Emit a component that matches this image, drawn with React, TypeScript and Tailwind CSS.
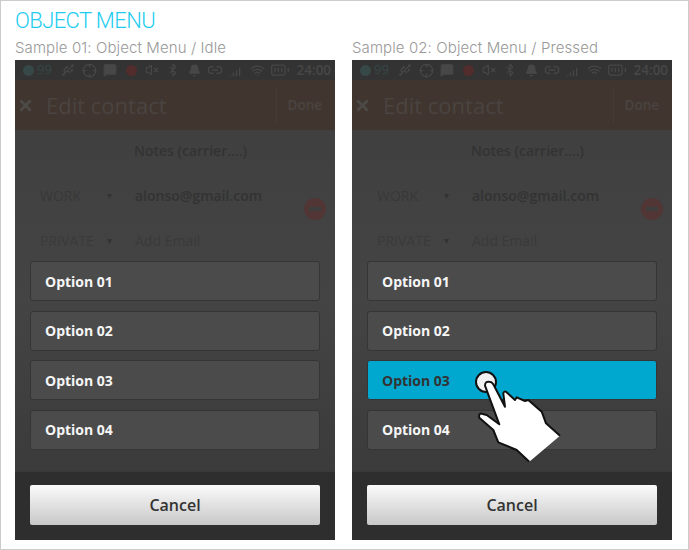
import { Bell, Bluetooth, Crosshair, MessageSquare, Usb, Wifi, BatteryFull, Link2, SignalHigh, VolumeX, X } from 'lucide-react'

const options = ['Option 01', 'Option 02', 'Option 03', 'Option 04']

function Slot({ children }: { children: React.ReactNode }) {
  return <div className="w-[21px] flex justify-center">{children}</div>
}

function StatusBar() {
  return (
    <div className="h-5 bg-[#333333] flex items-center pl-[8px] text-[#474747]">
      <div className="flex items-center gap-[3px] w-[34.5px]">
        <div className="w-[11px] h-[11px] rounded-full bg-[#364847]" />
        <span className="text-[13px] font-['Open_Sans',sans-serif] text-[#364847]">99</span>
      </div>
      <Slot><Usb size={14} /></Slot>
      <Slot><Crosshair size={15} /></Slot>
      <Slot><MessageSquare size={14} fill="#474747" /></Slot>
      <Slot><div className="w-[11px] h-[11px] rounded-full bg-[#532c2c]" /></Slot>
      <Slot><VolumeX size={14} /></Slot>
      <Slot><Bluetooth size={14} /></Slot>
      <Slot><Bell size={13} fill="#474747" /></Slot>
      <Slot><Link2 size={16} /></Slot>
      <Slot><SignalHigh size={15} /></Slot>
      <Slot><Wifi size={15} /></Slot>
      <div className="w-[21px] flex justify-center ml-[2px]"><BatteryFull size={20} strokeWidth={1.5} /></div>
      <span className="ml-[6px] text-[13.5px] font-semibold font-['Open_Sans',sans-serif]">24:00</span>
    </div>
  )
}

function Backdrop() {
  return (
    <>
      <StatusBar />
      <div className="h-[50px] bg-[#413530] flex items-center font-['Open_Sans',sans-serif] text-[#4a4440] pt-[1px]">
        <X size={17} strokeWidth={4} className="ml-[2px] text-[#4c4a46]" />
        <span className="text-[22px] ml-[12px]">Edit contact</span>
        <div className="ml-auto h-[34px] border-l border-[#483b34] flex items-center pl-[11px] pr-[13px]">
          <span className="text-[13.5px] font-semibold">Done</span>
        </div>
      </div>
      <div className="h-[341px] bg-gradient-to-b from-[#404040] via-[#444444] to-[#3b3b3b] font-['Open_Sans',sans-serif] text-[#333333] text-[14px]">
        <div className="pt-[10px] pl-[119px] font-semibold">Notes (carrier....)</div>
        <div className="flex items-center mt-[24px] pl-[25px]">
          <span className="w-[67px] text-[#383838]">WORK</span>
          <span className="w-[9px] text-[10px] text-[#333333]">▾</span>
          <span className="ml-[19px] font-semibold">alonso@gmail.com</span>
        </div>
        <div className="flex items-center mt-[24px] pl-[25px] text-[#3a3a3a]">
          <span className="w-[67px]">PRIVATE</span>
          <span className="w-[9px] text-[10px] text-[#333333]">▾</span>
          <span className="ml-[19px]">Add Email</span>
        </div>
      </div>
      <div className="h-[69px] bg-[#2e2e2e] border-t border-[#393939]" />
    </>
  )
}

function Phone({ title, pressed }: { title: string; pressed?: number }) {
  return (
    <div className="w-[320px]">
      <div className="h-[20px] text-[15px] leading-[16px] text-[#999999] font-['Inter',sans-serif] font-light tracking-[0.1px]">{title}</div>
      <div className="relative h-[480px] overflow-hidden">
        <Backdrop />
        {/* red minus sits over the form */}
        <div className="absolute left-[289px] top-[138px] w-[22px] h-[22px] rounded-full bg-[#523636] flex items-center justify-center">
          <div className="w-[12px] h-[4px] bg-[#3e3e3e]" />
        </div>
        <div className="absolute left-[15px] top-[201px] w-[290px] flex flex-col gap-[9.5px]">
          {options.map((o, i) => (
            <div
              key={o}
              className={
                i === pressed
                  ? 'h-[40px] flex items-center pl-[14px] rounded-[3px] border border-[#353535] bg-[#00a8d0] text-[#333333] text-[14px] font-bold font-["Open_Sans",sans-serif]'
                  : 'h-[40px] flex items-center pl-[14px] rounded-[3px] border border-[#353535] bg-[#4b4b4b] text-[#f6f6f6] text-[14px] font-bold font-["Open_Sans",sans-serif]'
              }
            >
              {o}
            </div>
          ))}
        </div>
        <div className="absolute left-[15px] top-[425px] w-[290px] h-[40px] rounded-[2px] bg-gradient-to-b from-[#fbfbfb] to-[#c8c8c8] flex items-center justify-center text-[16px] font-semibold text-[#333333] font-['Open_Sans',sans-serif]">
          Cancel
        </div>
      </div>
    </div>
  )
}

function Hand() {
  return (
    <svg className="absolute left-[469px] top-[364px]" width="95" height="100" viewBox="0 0 95 100">
      <circle cx="16" cy="17" r="10" fill="#f2f2f2" stroke="#111111" strokeWidth="2" />
      <path
        d="M59.3 96.7 L46.7 85 L28.3 77.3 L23.3 65 L9.3 52.7 C8.5 50 10 48 11.7 48.7 L16.7 50 L29.3 59.3 L15 20.7 C15 17 17 16.5 19.3 16.7 C21 16.8 22.5 18 23.3 19.3 L35 41.7 L33.3 28.3 C33.5 27 35 26 36 26.7 L45 35 L46.7 32.3 L55 36 L58.3 35 L71.7 46.7 L76 58.3 L90 70.7"
        fill="#ffffff"
        stroke="#111111"
        strokeWidth="2"
        strokeLinejoin="round"
      />
    </svg>
  )
}

export default function App() {
  return (
    <div className="relative w-[689px] h-[550px] bg-white border border-[#cccccc] overflow-hidden">
      <div className="pl-[14px] pt-[6px] h-[39px] text-[22px] leading-[28px] tracking-[-0.6px] text-[#22ccf2] font-['Roboto',sans-serif] font-light">OBJECT MENU</div>
      <div className="flex pl-[14px] gap-[17px]">
        <Phone title="Sample 01: Object Menu / Idle" />
        <Phone title="Sample 02: Object Menu / Pressed" pressed={2} />
      </div>
      <Hand />
    </div>
  )
}
